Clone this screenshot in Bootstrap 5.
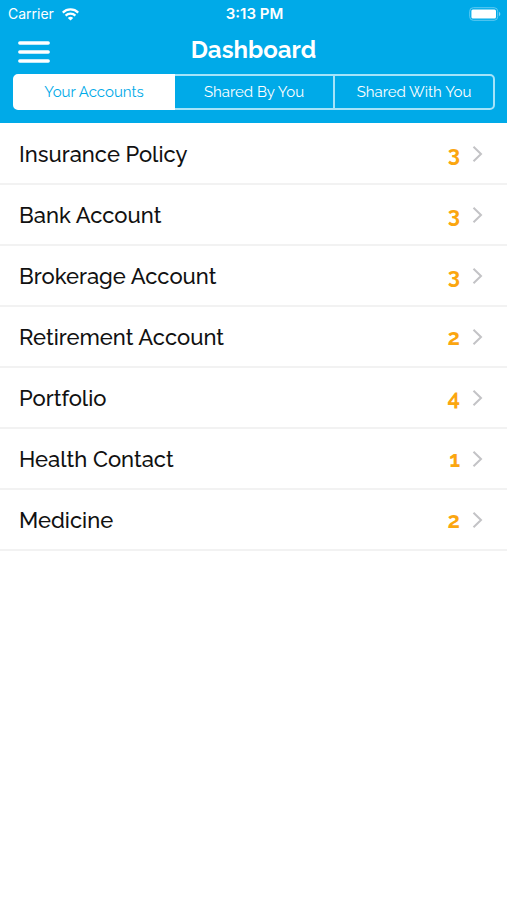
<!DOCTYPE html>
<html lang="en">
<head>
<meta charset="utf-8">
<meta name="viewport" content="width=device-width, initial-scale=1">
<title>Dashboard</title>
<link href="https://cdn.jsdelivr.net/npm/bootstrap@5.3.0/dist/css/bootstrap.min.css" rel="stylesheet">
<style>
  :root { --sky: #00aae8; --amber: #fba610; }
  body { font-family: Raleway, Lato, "Open Sans", sans-serif; background: #fff; }
  .app-head { background: var(--sky); color: #fff; padding-bottom: 13px; }
  .status-bar { font: 14px/20px Inter, Roboto, sans-serif; padding: 4px 6px 0 8px; }
  .side { flex: 1 1 0; }
  .clock { font-weight: 600; font-size: 15px; }
  .title-bar { height: 50px; padding: 2px 18px 0; }
  .title-bar h1 { font-size: 24px; line-height: 30px; font-weight: 700; }
  .menu-btn { line-height: 0; margin-top: 4px; }
  .tabs { margin: 0 12px 0 13px; }
  .tabs .btn {
    --bs-btn-color: #fff; --bs-btn-border-color: #a5e3f9;
    --bs-btn-hover-color: #fff; --bs-btn-hover-bg: #1ab5ee; --bs-btn-hover-border-color: #fff;
    --bs-btn-active-color: var(--sky); --bs-btn-active-bg: #fff; --bs-btn-active-border-color: #fff;
    --bs-btn-border-radius: 5px; --bs-btn-border-width: 2px;
    --bs-btn-font-size: 15px; --bs-btn-line-height: 20px;
    --bs-btn-padding-x: 0; --bs-btn-padding-y: 6px;
    flex: 1 1 0;
  }
  .tabs.btn-group > .btn.btn:not(:first-child) { margin-left: -2px; }
  .accounts { padding-top: 1px; }
  .accounts .list-group-item {
    height: 61px; padding: 0 24px 0 19px; color: #111;
    border-color: #f2f2f2; border-width: 0 0 2px; font-size: 22px; line-height: 28px; font-weight: 500;
  }
  .accounts .list-group-item:last-child { border-bottom-width: 2px; }
  .count { color: var(--amber); font-weight: 700; padding-top: 1px; margin-right: 12px; }
</style>
</head>
<body>
<header class="app-head">
  <div class="status-bar d-flex align-items-center">
    <div class="side d-flex align-items-center gap-2">
      <span>Carrier</span>
      <svg width="17" height="13" viewBox="0 0 17 13" fill="none" stroke="#fff" stroke-width="2.2" aria-label="Wi-Fi">
        <path d="M.8 4.6a11 11 0 0 1 15.4 0M3.6 7.6a7 7 0 0 1 9.8 0"/>
        <path d="M8.5 12.6 5.8 9.9a4 4 0 0 1 5.4 0z" fill="#fff" stroke="none"/>
      </svg>
    </div>
    <span class="clock">3:13 PM</span>
    <div class="side d-flex justify-content-end">
      <svg width="32" height="14" viewBox="0 0 32 14" aria-label="Battery full">
        <rect x=".7" y=".7" width="28" height="12.6" rx="3.6" fill="none" stroke="#5fcaf2"/>
        <rect x="2.4" y="2.4" width="24.6" height="9.2" rx="1.5" fill="#fff"/>
        <path d="M30 4.8c1.8.8 1.8 3.6 0 4.4z" fill="#7fd5f5"/>
      </svg>
    </div>
  </div>
  <div class="title-bar d-flex align-items-center">
    <div class="side">
      <button type="button" class="menu-btn btn p-0 border-0" aria-label="Menu">
        <svg width="32" height="24" viewBox="0 0 32 24" stroke="#fff" stroke-width="3.4" stroke-linecap="round">
          <path d="M1.8 3h28.4M1.8 12h28.4M1.8 21h28.4"/>
        </svg>
      </button>
    </div>
    <h1 class="m-0">Dashboard</h1>
    <div class="side"></div>
  </div>
  <div class="tabs btn-group d-flex" role="group" aria-label="Account views">
    <button type="button" class="btn active" aria-pressed="true">Your Accounts</button>
    <button type="button" class="btn" aria-pressed="false">Shared By You</button>
    <button type="button" class="btn" aria-pressed="false">Shared With You</button>
  </div>
</header>
<svg class="d-none" aria-hidden="true">
  <symbol id="chevron" viewBox="0 0 11 18"><path d="m1.5 1.8 7.5 7.2-7.5 7.2" fill="none" stroke="#c3c3c6" stroke-width="2"/></symbol>
</svg>
<main>
  <div class="accounts list-group list-group-flush">
    <a href="#" class="list-group-item list-group-item-action d-flex align-items-center"><span class="me-auto">Insurance Policy</span><span class="count">3</span><svg width="11" height="18"><use href="#chevron"/></svg></a>
    <a href="#" class="list-group-item list-group-item-action d-flex align-items-center"><span class="me-auto">Bank Account</span><span class="count">3</span><svg width="11" height="18"><use href="#chevron"/></svg></a>
    <a href="#" class="list-group-item list-group-item-action d-flex align-items-center"><span class="me-auto">Brokerage Account</span><span class="count">3</span><svg width="11" height="18"><use href="#chevron"/></svg></a>
    <a href="#" class="list-group-item list-group-item-action d-flex align-items-center"><span class="me-auto">Retirement Account</span><span class="count">2</span><svg width="11" height="18"><use href="#chevron"/></svg></a>
    <a href="#" class="list-group-item list-group-item-action d-flex align-items-center"><span class="me-auto">Portfolio</span><span class="count">4</span><svg width="11" height="18"><use href="#chevron"/></svg></a>
    <a href="#" class="list-group-item list-group-item-action d-flex align-items-center"><span class="me-auto">Health Contact</span><span class="count">1</span><svg width="11" height="18"><use href="#chevron"/></svg></a>
    <a href="#" class="list-group-item list-group-item-action d-flex align-items-center"><span class="me-auto">Medicine</span><span class="count">2</span><svg width="11" height="18"><use href="#chevron"/></svg></a>
  </div>
</main>
<script src="https://cdn.jsdelivr.net/npm/bootstrap@5.3.0/dist/js/bootstrap.bundle.min.js"></script>
</body>
</html>
